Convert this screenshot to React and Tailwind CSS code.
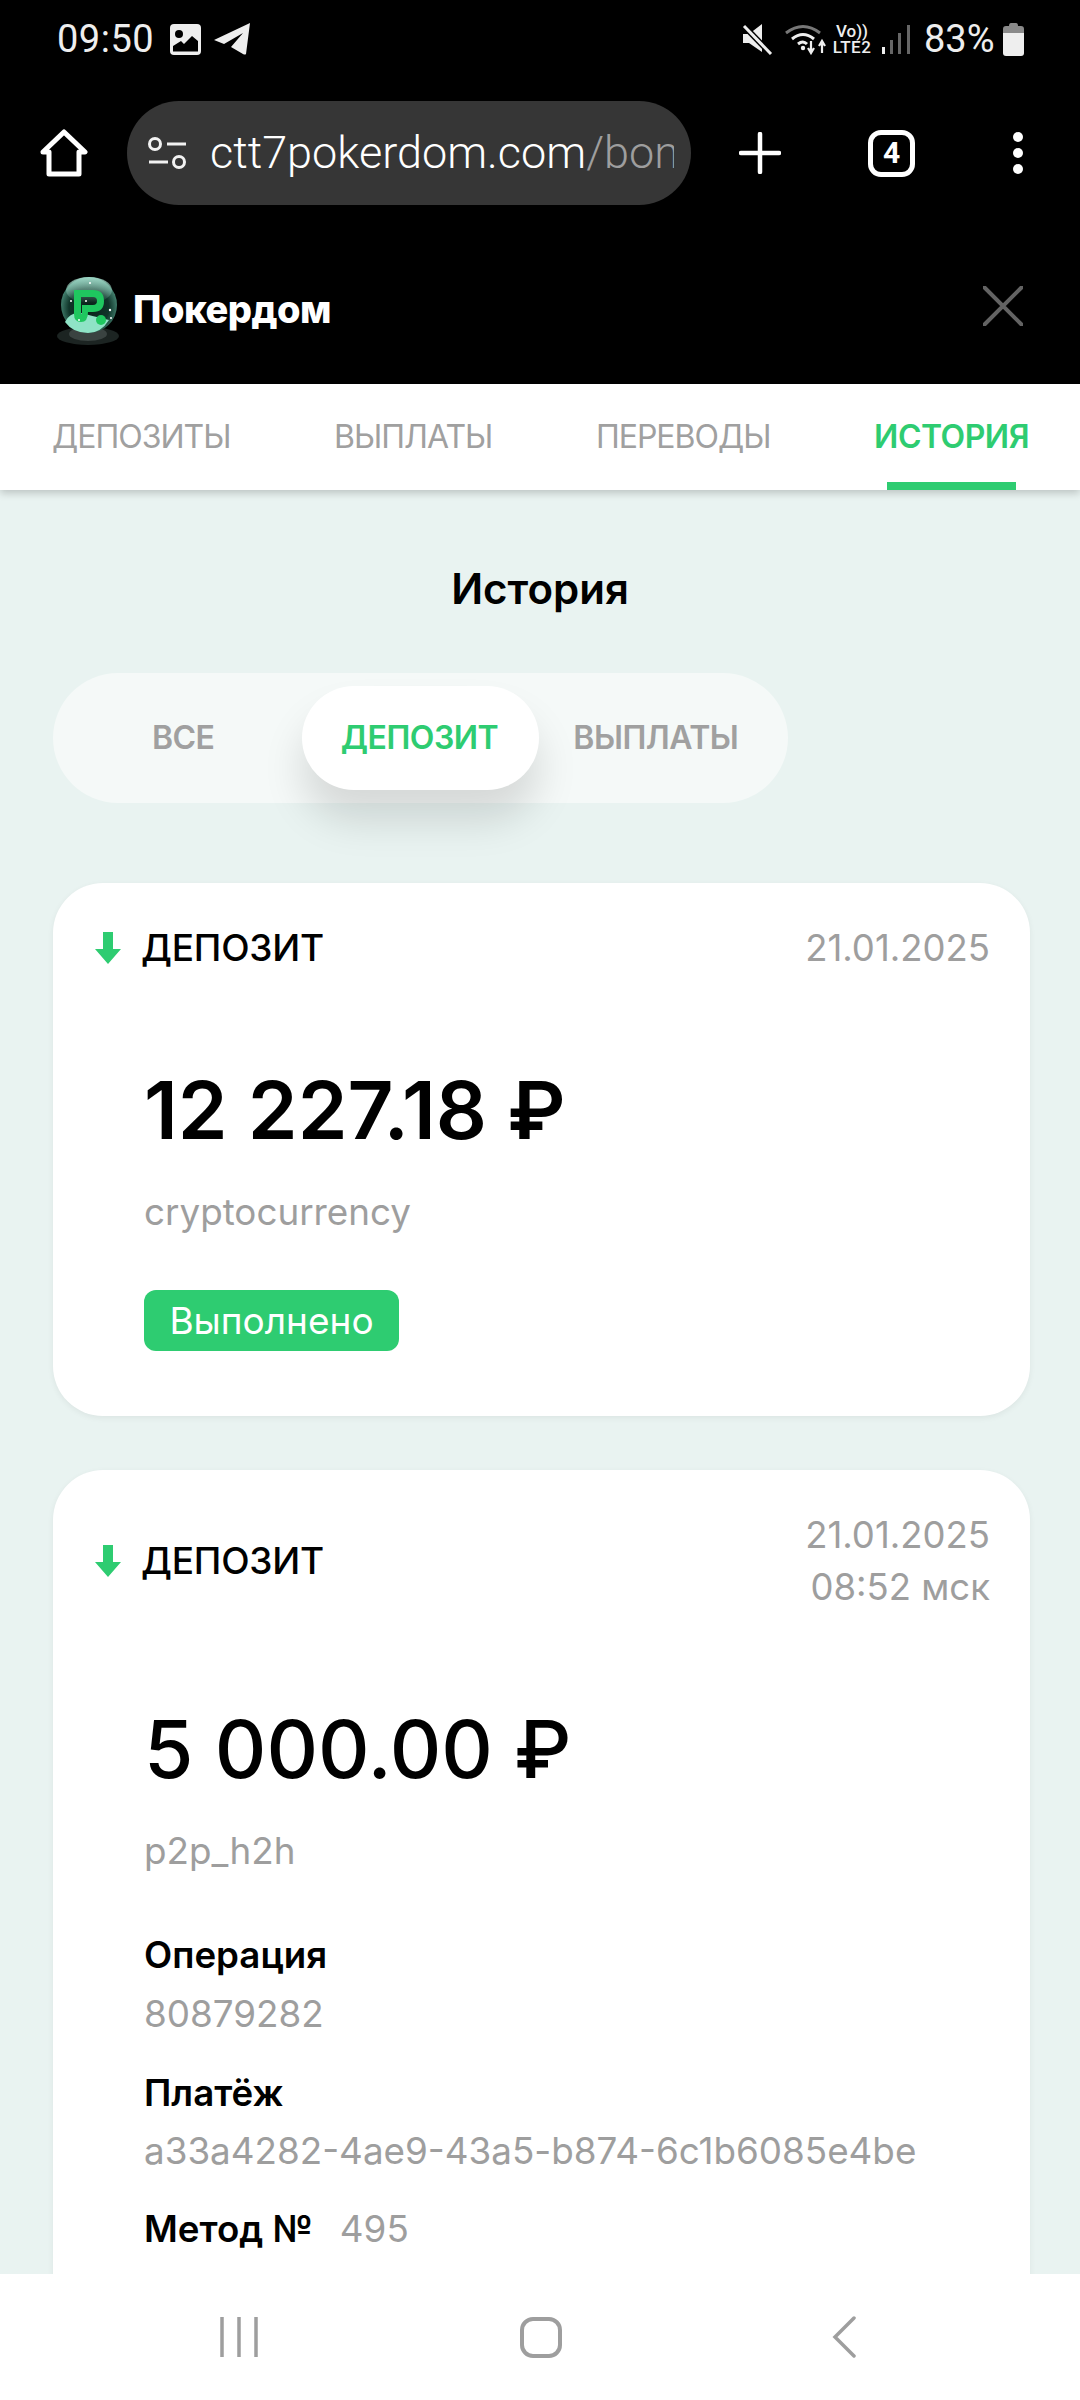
import React from 'react'

const pageTabs = ['ДЕПОЗИТЫ', 'ВЫПЛАТЫ', 'ПЕРЕВОДЫ', 'ИСТОРИЯ']
const filters = ['ВСЕ', 'ДЕПОЗИТ', 'ВЫПЛАТЫ']

function StatusBar() {
  return (
    <div className="h-[78px] flex items-center pl-[57px] pr-[56px] text-[#eeeeee] font-[Roboto,sans-serif]">
      <span className="text-[38px] leading-none tracking-[0.5px] w-[113px]">09:50</span>
      {/* gallery notification */}
      <svg width="31" height="31" viewBox="0 0 31 31" className="mr-[13px]">
        <rect x="0" y="0" width="31" height="31" rx="4" fill="#eeeeee" />
        <circle cx="9" cy="10" r="4" fill="#000" />
        <path d="M3 27 V22 L11 17 L14 20 L22 12 L28 17 V27 Z" fill="#000" />
        <path d="M3 27 H28" stroke="#000" strokeWidth="1" />
      </svg>
      {/* telegram notification */}
      <svg width="37" height="32" viewBox="0 0 37 32">
        <path d="M0 17 L36 0 L32 31 Q31 32 29 31 L17 24 L29 10 L10 21 Z" fill="#eeeeee" />
      </svg>
      <div className="flex-1" />
      <svg width="32" height="32" viewBox="0 0 32 32" className="mr-[12px]">
        <path d="M2 11 H8 L21 1 V29 L8 20 H2 Z" fill="#eeeeee" />
        <path d="M2 2 L30 31" stroke="#000" strokeWidth="6" />
        <path d="M3 3 L30 31" stroke="#eeeeee" strokeWidth="3" />
      </svg>
      <svg width="42" height="32" viewBox="0 0 42 32" fill="none" className="mr-[4px]">
        <path d="M1 10 Q18 -3 35 10" stroke="#777777" strokeWidth="3" />
        <path d="M7 16 Q18 7 29 16" stroke="#eeeeee" strokeWidth="3" />
        <path d="M13 21 Q18 17 22 21" stroke="#eeeeee" strokeWidth="3" />
        <circle cx="18" cy="25" r="2.2" fill="#eeeeee" />
        <path d="M26 18 V29 M23 25 L26 30 L29 25" stroke="#eeeeee" strokeWidth="2.2" />
        <path d="M37 30 V19 M34 23 L37 18 L40 23" stroke="#eeeeee" strokeWidth="2.2" />
      </svg>
      <div className="w-[42px] flex flex-col items-center text-[17px] leading-[16px] font-medium mr-[9px]">
        <span>Vo))</span>
        <span className="tracking-[0.5px]">LTE2</span>
      </div>
      <svg width="28" height="30" viewBox="0 0 28 30" className="mr-[14px]">
        <rect x="0" y="23" width="3" height="7" fill="#eeeeee" />
        <rect x="8" y="16" width="3" height="14" fill="#666666" />
        <rect x="16" y="9" width="3" height="21" fill="#666666" />
        <rect x="25" y="1" width="3" height="29" fill="#666666" />
      </svg>
      <span className="text-[38px] leading-none w-[79px]">83%</span>
      <svg width="21" height="33" viewBox="0 0 21 33">
        <path d="M6 3 Q6 0 8 0 H13 Q15 0 15 3 H18 Q21 3 21 6 V10 H0 V6 Q0 3 3 3 Z" fill="#8a8a8a" />
        <path d="M0 10 H21 V30 Q21 33 18 33 H3 Q0 33 0 30 Z" fill="#eeeeee" />
      </svg>
    </div>
  )
}

function BrowserBar() {
  return (
    <div className="h-[150px] flex items-center pl-[40px] text-white">
      <svg width="48" height="48" viewBox="0 0 48 48" fill="none" stroke="#fff" strokeWidth="5" strokeLinejoin="round" strokeLinecap="round">
        <path d="M3 23 L24 3 L45 23 H39 V45 H9 V23 Z" />
      </svg>
      <div className="ml-[39px] w-[564px] h-[104px] rounded-full bg-[#363636] flex items-center pl-[21px]">
        <svg width="39" height="34" viewBox="0 0 39 34" fill="none" stroke="#f2f2f2" strokeWidth="3">
          <circle cx="7" cy="8" r="5.5" />
          <path d="M19 8 H38" />
          <path d="M1 26 H20" />
          <circle cx="31" cy="26" r="5.5" />
        </svg>
        <div className="ml-[23px] w-[464px] overflow-hidden whitespace-nowrap text-[45px] leading-[56px] font-[Roboto,sans-serif] font-light">
          <span>ctt7pokerdom.com</span>
          <span className="text-[#9e9e9e]">/bonuses</span>
        </div>
      </div>
      <svg width="42" height="42" viewBox="0 0 42 42" className="ml-[48px]" stroke="#fff" strokeWidth="4.5" strokeLinecap="round">
        <path d="M21 2 V40 M2 21 H40" />
      </svg>
      <div className="ml-[87px] w-[47px] h-[47px] rounded-[13px] border-[5px] border-white flex items-center justify-center text-[30px] leading-none font-bold font-[Roboto,sans-serif]">
        4
      </div>
      <div className="ml-[98px] flex flex-col gap-[6px]">
        <span className="w-[10px] h-[10px] rounded-full bg-white" />
        <span className="w-[10px] h-[10px] rounded-full bg-white" />
        <span className="w-[10px] h-[10px] rounded-full bg-white" />
      </div>
    </div>
  )
}

// snow globe with the green P mark
function GlobeLogo() {
  return (
    <svg width="64" height="70" viewBox="0 0 64 70">
      <defs>
        <radialGradient id="glass" cx="50%" cy="55%" r="55%">
          <stop offset="0%" stopColor="#0a1f18" />
          <stop offset="65%" stopColor="#10352a" />
          <stop offset="100%" stopColor="#4d8f7c" />
        </radialGradient>
        <linearGradient id="glassTop" x1="0" y1="0" x2="0" y2="1">
          <stop offset="0%" stopColor="#a5ddcc" stopOpacity="0.9" />
          <stop offset="100%" stopColor="#a5ddcc" stopOpacity="0" />
        </linearGradient>
      </defs>
      <ellipse cx="31" cy="60" rx="31" ry="9" fill="#1c2422" />
      <ellipse cx="31" cy="58" rx="19" ry="7" fill="#3a4341" />
      <circle cx="32" cy="29" r="28" fill="url(#glass)" />
      <ellipse cx="32" cy="14" rx="23" ry="13" fill="url(#glassTop)" />
      <path d="M8 46 Q14 34 28 38 Q44 42 52 44 Q44 57 31 57 Q16 57 8 46 Z" fill="#8fe3c6" />
      <path
        d="M17 14 H36 Q47 14 47 25 Q47 36 36 36 H31 Q31 46 24 46 Q17 46 17 38 Z M24 21 V38 H25 V29 H36 Q40 29 40 25 Q40 21 36 21 Z"
        fill="#1fc75f"
        fillRule="evenodd"
      />
      <circle cx="44" cy="44" r="5" fill="#1fc75f" />
      <circle cx="33" cy="7" r="1" fill="#fff" />
      <circle cx="29" cy="25" r="1" fill="#fff" />
      <circle cx="53" cy="34" r="1.2" fill="#fff" />
      <circle cx="14" cy="25" r="1" fill="#fff" />
      <circle cx="22" cy="44" r="1" fill="#fff" />
      <circle cx="54" cy="42" r="1" fill="#fff" />
    </svg>
  )
}

function SiteHeader() {
  return (
    <div className="h-[156px] flex items-center pl-[57px] pr-[57px]">
      <div className="mt-[10px] flex items-center">
        <GlobeLogo />
        <span className="ml-[12px] mb-[4px] text-white text-[38px] leading-none font-extrabold tracking-[-0.5px]">Покердом</span>
      </div>
      <div className="flex-1" />
      <svg width="40" height="40" viewBox="0 0 40 40" stroke="#636363" strokeWidth="4" strokeLinecap="round">
        <path d="M1.5 1.5 L38.5 38.5 M38.5 1.5 L1.5 38.5" />
      </svg>
    </div>
  )
}

function PageTabs() {
  return (
    <div className="relative z-10 h-[106px] bg-white shadow-[0_3px_8px_rgba(0,0,0,0.2)] flex items-center justify-between pl-[52px] pr-[51px]">
      {pageTabs.map(tab => (
        <div
          key={tab}
          className={
            tab === 'ИСТОРИЯ'
              ? 'relative h-full flex items-center text-[32px] tracking-[-0.5px] font-semibold text-[#2ecc71]'
              : 'relative h-full flex items-center text-[32px] tracking-[-1px] font-normal text-[#a0a0a0]'
          }
        >
          {tab}
          {tab === 'ИСТОРИЯ' && <span className="absolute left-[13px] right-[13px] bottom-0 h-[8px] bg-[#2ecc71]" />}
        </div>
      ))}
    </div>
  )
}

function Filters() {
  return (
    <div className="mt-[60px] ml-[53px] w-[735px] h-[130px] rounded-full bg-[#f5f9f8] p-[13px] flex">
      {filters.map(item => (
        <div
          key={item}
          className={
            item === 'ДЕПОЗИТ'
              ? 'flex-1 rounded-full bg-white shadow-[0_30px_40px_rgba(0,0,0,0.13)] flex items-center justify-center pr-[2px] text-[32px] tracking-[-0.5px] font-semibold text-[#2ecc71]'
              : 'flex-1 flex items-center justify-center pr-[2px] text-[32px] tracking-[-0.5px] font-semibold text-[#a0a0a0]'
          }
        >
          {item}
        </div>
      ))}
    </div>
  )
}

function DownArrow() {
  return (
    <svg width="26" height="32" viewBox="0 0 26 32" fill="#2ecc71">
      <path d="M8 0 H18 V17 H26 L13 32 L0 17 H8 Z" />
    </svg>
  )
}

function CardHeader({ dates }) {
  return (
    <div className="flex items-center justify-between pl-[42px] pr-[40px]">
      <div className="flex items-center gap-[20px]">
        <DownArrow />
        <span className="text-[37px] tracking-[-0.2px] leading-[40px] font-medium text-black">ДЕПОЗИТ</span>
      </div>
      <div className="text-right text-[36.5px] leading-[52px] text-[#9e9e9e]">
        {dates.map(line => (
          <div key={line}>{line}</div>
        ))}
      </div>
    </div>
  )
}

function Label({ children, className = '' }) {
  return <div className={`text-[36.7px] leading-[44px] font-semibold text-black ${className}`}>{children}</div>
}

function Value({ children, className = '' }) {
  return <div className={`text-[36.8px] leading-[44px] text-[#9e9e9e] ${className}`}>{children}</div>
}

export default function App() {
  return (
    <div className="w-[1080px] h-[2400px] flex flex-col overflow-hidden bg-black font-['Inter',sans-serif]">
      <StatusBar />
      <BrowserBar />
      <SiteHeader />
      <PageTabs />

      <main className="flex-1 min-h-0 overflow-hidden bg-[#e9f3f1]">
        <h1 className="mt-[75px] text-center text-[42px] leading-[48px] font-semibold text-black">История</h1>
        <Filters />

        <section className="mt-[80px] ml-[53px] mr-[50px] h-[533px] rounded-[50px] bg-white shadow-[0_2px_6px_rgba(0,0,0,0.06)] pt-[39px]">
          <CardHeader dates={['21.01.2025']} />
          <div className="mt-[96px] pl-[91px] text-[80px] leading-[80px] font-semibold text-black">12 227.18 ₽</div>
          <Value className="mt-[40px] pl-[91px]">cryptocurrency</Value>
          <div className="mt-[56px] ml-[91px] w-[255px] h-[61px] rounded-[12px] bg-[#2ecc71] flex items-center justify-center text-[37px] text-white">
            Выполнено
          </div>
        </section>

        <section className="mt-[54px] ml-[53px] mr-[50px] rounded-t-[50px] bg-white shadow-[0_2px_6px_rgba(0,0,0,0.06)] pt-[39px] pb-[40px]">
          <CardHeader dates={['21.01.2025', '08:52 мск']} />
          <div className="mt-[96px] pl-[91px] text-[80px] leading-[80px] font-medium text-black">5 000.00 ₽</div>
          <Value className="mt-[40px] pl-[91px]">p2p_h2h</Value>
          <div className="pl-[91px]">
            <Label className="mt-[60px]">Операция</Label>
            <Value className="mt-[15px]">80879282</Value>
            <Label className="mt-[35px]">Платёж</Label>
            <Value className="mt-[14px]">a33a4282-4ae9-43a5-b874-6c1b6085e4be</Value>
            <div className="mt-[34px] flex gap-[27px]">
              <Label>Метод №</Label>
              <Value>495</Value>
            </div>
          </div>
        </section>
      </main>

      <nav className="h-[126px] bg-white flex items-center">
        <svg width="38" height="40" viewBox="0 0 38 40" className="ml-[220px]" stroke="#9e9e9e" strokeWidth="3.5">
          <path d="M2 0 V40 M19 0 V40 M36 0 V40" />
        </svg>
        <div className="ml-[262px] w-[42px] h-[41px] rounded-[13px] border-[4px] border-[#9e9e9e]" />
        <svg width="24" height="42" viewBox="0 0 24 42" className="ml-[270px]" fill="none" stroke="#9e9e9e" strokeWidth="3.5" strokeLinecap="round">
          <path d="M22 2 L3 21 L22 40" />
        </svg>
      </nav>
    </div>
  )
}
